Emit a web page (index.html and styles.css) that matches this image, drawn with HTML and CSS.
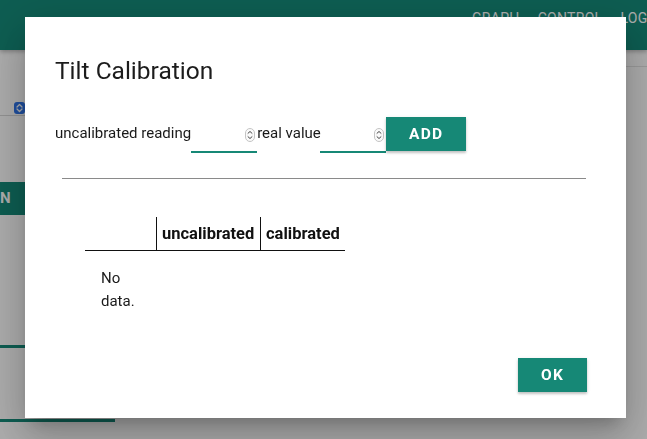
FILE: index.html
```html
<!DOCTYPE html>
<html>
<head>
<meta charset="utf-8">
<link rel="stylesheet" href="styles.css">
</head>
<body>
<div class="app">
  <header class="topbar">
    <nav class="nav">
      <span class="nav-item">Graph</span>
      <span class="nav-item">Control</span>
      <span class="nav-item">Log</span>
    </nav>
  </header>
  <div class="page">
    <div class="left-col">
      <div class="select-row">
        <span class="select-arrow">
          <svg width="11" height="12" viewBox="0 0 11 12"><path d="M3 5 L5.5 2.5 L8 5 M3 7 L5.5 9.5 L8 7" fill="none" stroke="#fff" stroke-width="1.3" stroke-linecap="round" stroke-linejoin="round"/></svg>
        </span>
      </div>
      <div class="bg-button">N</div>
      <div class="bg-line short"></div>
      <div class="bg-line long"></div>
    </div>
    <div class="mid-col"></div>
    <div class="right-col">
      <div class="faint-line"></div>
    </div>
  </div>
</div>
<div class="backdrop"></div>
<div class="dialog">
  <h2 class="dialog-title">Tilt Calibration</h2>
  <div class="add-row">
    <span class="label">uncalibrated reading</span>
    <div class="num-input">
      <span class="spinner"><svg width="10" height="14" viewBox="0 0 10 14"><rect x="0.5" y="0.5" width="9" height="13" rx="4.5" fill="#fafafa" stroke="#c4c4c4"/><path d="M3 5.3 L5 3.5 L7 5.3 M3 8.7 L5 10.5 L7 8.7" fill="none" stroke="#444" stroke-width="1" stroke-linecap="round" stroke-linejoin="round"/></svg></span>
    </div>
    <span class="label narrow">real value</span>
    <div class="num-input">
      <span class="spinner"><svg width="10" height="14" viewBox="0 0 10 14"><rect x="0.5" y="0.5" width="9" height="13" rx="4.5" fill="#fafafa" stroke="#c4c4c4"/><path d="M3 5.3 L5 3.5 L7 5.3 M3 8.7 L5 10.5 L7 8.7" fill="none" stroke="#444" stroke-width="1" stroke-linecap="round" stroke-linejoin="round"/></svg></span>
    </div>
    <button class="btn">Add</button>
  </div>
  <hr class="divider">
  <table class="cal-table">
    <thead>
      <tr>
        <th class="c1"></th>
        <th class="c2">uncalibrated</th>
        <th class="c3">calibrated</th>
      </tr>
    </thead>
    <tbody>
      <tr>
        <td class="empty">No data.</td>
        <td></td>
        <td></td>
      </tr>
    </tbody>
  </table>
  <div class="actions">
    <button class="btn ok">OK</button>
  </div>
</div>
</body>
</html>
```
FILE: styles.css
```css
html, body {
  margin: 0;
  padding: 0;
  width: 647px;
  height: 439px;
  overflow: hidden;
  font-family: Roboto, "Liberation Sans", sans-serif;
}
body {
  background: #ffffff;
}
.app {
  width: 647px;
  height: 439px;
  display: flex;
  flex-direction: column;
}
.topbar {
  height: 50px;
  flex: none;
  background: #148a79;
  box-shadow: 0 2px 4px rgba(0,0,0,0.25);
  display: flex;
}
.nav {
  display: flex;
  gap: 18px;
  padding-left: 472px;
  padding-top: 10px;
  white-space: nowrap;
}
.nav-item {
  color: #ffffff;
  font-size: 14px;
  line-height: 16px;
  text-transform: uppercase;
  letter-spacing: 0.3px;
}
.page {
  flex: 1;
  display: grid;
  grid-template-columns: 25px 1fr 21px;
}
.left-col {
  display: flex;
  flex-direction: column;
}
.select-row {
  height: 66px;
  border-bottom: 1px solid #d8d8d8;
  display: flex;
  align-items: flex-end;
  justify-content: flex-end;
  padding-bottom: 1px;
  box-sizing: border-box;
}
.select-arrow {
  width: 11px;
  height: 12px;
  background: #2f75ea;
  border-radius: 3px;
  display: flex;
}
.bg-button {
  margin-top: 66px;
  height: 33px;
  background: #148a79;
  color: #fff;
  font-weight: 700;
  font-size: 15px;
  line-height: 33px;
  padding-left: 0;
  overflow: hidden;
}
.bg-line {
  background: #148a79;
  height: 3px;
}
.bg-line.short {
  margin-top: 130px;
  width: 25px;
}
.bg-line.long {
  margin-top: 71px;
  width: 115px;
}
.right-col {
  padding-top: 16px;
}
.faint-line {
  height: 1px;
  background: #e4e4e4;
}
.backdrop {
  position: fixed;
  inset: 0;
  background: rgba(0,0,0,0.32);
}
.dialog {
  position: fixed;
  left: 25px;
  top: 17px;
  width: 601px;
  height: 401px;
  box-sizing: border-box;
  background: #ffffff;
  padding: 40px 30px 26px 30px;
  display: flex;
  flex-direction: column;
  box-shadow: 0 11px 15px -7px rgba(0,0,0,.2), 0 24px 38px 3px rgba(0,0,0,.14), 0 9px 46px 8px rgba(0,0,0,.12);
}
.dialog-title {
  margin: 0;
  font-size: 24.5px;
  line-height: 28px;
  font-weight: 400;
  color: #1c1c1c;
}
.add-row {
  margin-top: 32px;
  display: flex;
  align-items: flex-start;
  height: 36px;
}
.label {
  font-size: 15px;
  line-height: 18px;
  padding-top: 7px;
  color: #1a1a1a;
  white-space: nowrap;
}
.label.narrow {
  width: 63px;
  overflow: visible;
}
.num-input {
  width: 66px;
  height: 36px;
  box-sizing: border-box;
  border-bottom: 2px solid #168876;
  display: flex;
  justify-content: flex-end;
  align-items: flex-start;
  padding-top: 11px;
  padding-right: 2px;
  flex: none;
}
.spinner {
  display: flex;
}
.btn {
  border: none;
  background: #168876;
  color: #ffffff;
  font-family: Roboto, "Liberation Sans", sans-serif;
  font-weight: 700;
  font-size: 15.5px;
  letter-spacing: 1.3px;
  text-transform: uppercase;
  height: 34px;
  width: 80px;
  padding: 0;
  flex: none;
  box-shadow: 0 2px 2px rgba(0,0,0,0.18), 0 1px 4px rgba(0,0,0,0.1);
}
.divider {
  margin: 25px 10px 0 7px;
  border: none;
  height: 1px;
  background: #8a8a8a;
}
.cal-table {
  margin-top: 38px;
  margin-left: 30px;
  border-collapse: collapse;
  table-layout: fixed;
  width: 260px;
}
.cal-table th {
  height: 33px;
  padding: 0 5px;
  font-size: 16.5px;
  font-weight: 700;
  color: #111;
  text-align: left;
  border-bottom: 1px solid #111;
  white-space: nowrap;
}
.cal-table th.c1 { width: 71px; padding: 0; }
.cal-table th.c2 { width: 104px; border-left: 1px solid #111; box-sizing: border-box; }
.cal-table th.c3 { border-left: 1px solid #111; }
.cal-table td {
  padding: 0;
  vertical-align: top;
}
.cal-table td.empty {
  padding: 16px 16px 0 16px;
  font-size: 15px;
  line-height: 23px;
  color: #1a1a1a;
}
.actions {
  margin-top: auto;
  display: flex;
  justify-content: flex-end;
  padding-right: 9px;
}
.btn.ok {
  width: 69px;
}
```
